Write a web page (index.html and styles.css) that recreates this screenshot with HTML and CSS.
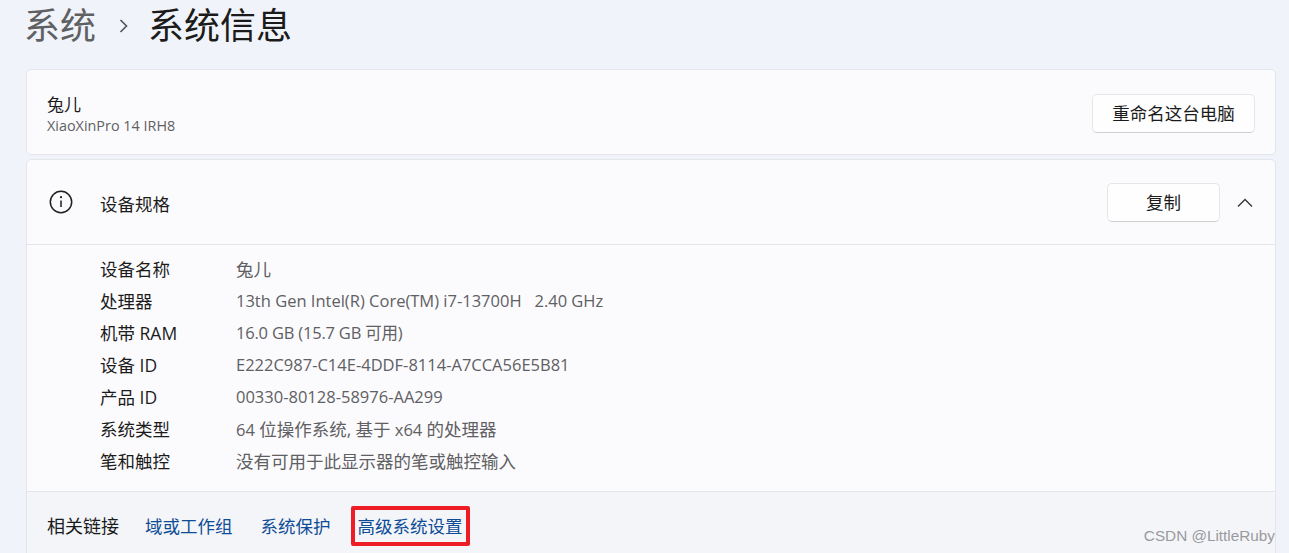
FILE: index.html
```html
<!DOCTYPE html>
<html lang="zh-CN">
<head>
  <meta charset="UTF-8" />
  <title>系统信息</title>
  <link rel="stylesheet" href="styles.css">
</head>
<body>

  <div class="page">
    <h1 class="breadcrumb">
      <span class="crumb-parent">系统</span>
      <svg class="crumb-arrow" width="12" height="16" viewBox="0 0 12 16"><path d="M2.5 2 L8.5 8 L2.5 14" /></svg>
      <span>系统信息</span>
    </h1>

    <div class="card name-card">
      <div class="name-text">
        <div class="pc-name">兔儿</div>
        <div class="pc-model">XiaoXinPro 14 IRH8</div>
      </div>
      <button class="btn rename-btn">重命名这台电脑</button>
    </div>

    <div class="card spec-card">
      <div class="spec-head">
        <svg class="info-icon" width="26" height="26" viewBox="0 0 26 26">
          <circle cx="13" cy="13" r="10.7" />
          <path d="M13 11.5 V18" />
          <circle class="dot" cx="13" cy="8.2" r="1.1" />
        </svg>
        <span class="spec-title">设备规格</span>
        <button class="btn copy-btn">复制</button>
        <svg class="chevron" width="18" height="12" viewBox="0 0 18 12"><path d="M2 9.5 L9 2.5 L16 9.5" /></svg>
      </div>

      <dl class="spec-list">
        <div class="spec-row"><dt>设备名称</dt><dd><span class="zh">兔儿</span></dd></div>
        <div class="spec-row"><dt>处理器</dt><dd>13th Gen Intel(R) Core(TM) i7-13700H&nbsp;&nbsp; 2.40 GHz</dd></div>
        <div class="spec-row"><dt>机带 RAM</dt><dd class="tight">16.0 GB (15.7 GB 可用)</dd></div>
        <div class="spec-row"><dt>设备 ID</dt><dd>E222C987-C14E-4DDF-8114-A7CCA56E5B81</dd></div>
        <div class="spec-row"><dt>产品 ID</dt><dd>00330-80128-58976-AA299</dd></div>
        <div class="spec-row"><dt>系统类型</dt><dd>64 <span class="zh">位操作系统,</span> <span class="zh">基于</span> x64 <span class="zh">的处理器</span></dd></div>
        <div class="spec-row"><dt>笔和触控</dt><dd><span class="zh">没有可用于此显示器的笔或触控输入</span></dd></div>
      </dl>

      <div class="links">
        <span class="links-label">相关链接</span>
        <a href="#" class="link">域或工作组</a>
        <a href="#" class="link">系统保护</a>
        <a href="#" class="link link-marked">高级系统设置</a>
      </div>
    </div>
  </div>

  <div class="watermark">CSDN @LittleRuby</div>

</body>
</html>
```

FILE: styles.css
```css
html, body {
  margin: 0;
  padding: 0;
  height: 553px;
  overflow: hidden;
}

body {
  font-family: "Open Sans", "Noto Sans CJK SC", sans-serif;
  background-color: #f0f3f9;
  color: #1b1b1b;
}

.page {
  padding-left: 26px;
  width: 1250px;
}

.breadcrumb {
  display: flex;
  align-items: center;
  height: 69px;
  margin: 0;
  padding: 0 0 18px;
  box-sizing: border-box;
  font-size: 36px;
  font-weight: 400;
  line-height: 52px;
}

.crumb-parent {
  margin-left: -2px;
  color: #5f6062;
}

.crumb-arrow {
  margin: 0 18px 0 22px;
}

.crumb-arrow path {
  fill: none;
  stroke: #55565a;
  stroke-width: 1.7;
}

.card {
  background-color: #fbfbfe;
  border: 1px solid #e5e6ec;
  border-radius: 5px;
  box-sizing: border-box;
}

.name-card {
  display: flex;
  justify-content: space-between;
  align-items: center;
  height: 86px;
  padding: 2px 20px 0;
}

.name-text {
  padding-top: 2px;
}

.pc-name {
  font-size: 17px;
  line-height: 24px;
}

.pc-model {
  font-size: 14.4px;
  line-height: 18px;
  color: #5f6062;
}

.btn {
  font-family: inherit;
  font-size: 17.5px;
  color: #1b1b1b;
  background-color: #fefefe;
  border: 1px solid #e6e6e8;
  border-bottom-color: #cfcfd2;
  border-radius: 5px;
  height: 39px;
  padding: 0 0 2px;
}

.rename-btn {
  width: 163px;
}

.spec-card {
  margin-top: 4px;
}

.spec-head {
  display: flex;
  align-items: center;
  height: 85px;
  padding: 0 20px;
  border-bottom: 1px solid #e5e6ec;
  box-sizing: border-box;
}

.info-icon {
  margin-left: 1px;
}

.info-icon circle {
  fill: none;
  stroke: #1f1f1f;
  stroke-width: 1.5;
}

.info-icon path {
  stroke: #1f1f1f;
  stroke-width: 1.5;
}

.info-icon .dot {
  fill: #1f1f1f;
  stroke: none;
}

.spec-title {
  margin-left: 26px;
  padding-top: 3px;
  font-size: 17.5px;
  flex: 1;
}

.copy-btn {
  width: 113px;
}

.chevron {
  margin: 1px 1px 0 16px;
}

.chevron path {
  fill: none;
  stroke: #333;
  stroke-width: 1.3;
}

.spec-list {
  margin: 0;
  padding: 8px 0 0 73px;
  height: 246px;
  box-sizing: border-box;
}

.spec-row {
  display: flex;
  height: 32px;
  line-height: 32px;
  font-size: 17.5px;
}

.spec-row dt {
  width: 136px;
}

.spec-row dd {
  margin: 0;
  font-size: 16.5px;
  color: #5f6062;
}

.spec-row .zh {
  font-size: 17.5px;
}

.spec-row .tight {
  letter-spacing: -0.2px;
}

.links {
  display: flex;
  align-items: center;
  height: 69px;
  padding: 0 0 0 20px;
  box-sizing: border-box;
  background-color: #f4f5f9;
  border-top: 1px solid #e5e6ec;
  font-size: 17.5px;
  line-height: 24px;
}

.links-label {
  width: 98px;
  font-size: 18px;
}

.link {
  color: #0e4c96;
  text-decoration: none;
  margin-right: 28px;
}

.link-marked {
  margin-left: -8px;
  padding: 4px 3px;
  border: 4px solid #ee1c25;
  border-radius: 2px;
}

.watermark {
  position: absolute;
  right: 14px;
  top: 527px;
  font-family: "Liberation Sans", sans-serif;
  font-size: 15.3px;
  line-height: 18px;
  color: #9a9a9c;
}
```
